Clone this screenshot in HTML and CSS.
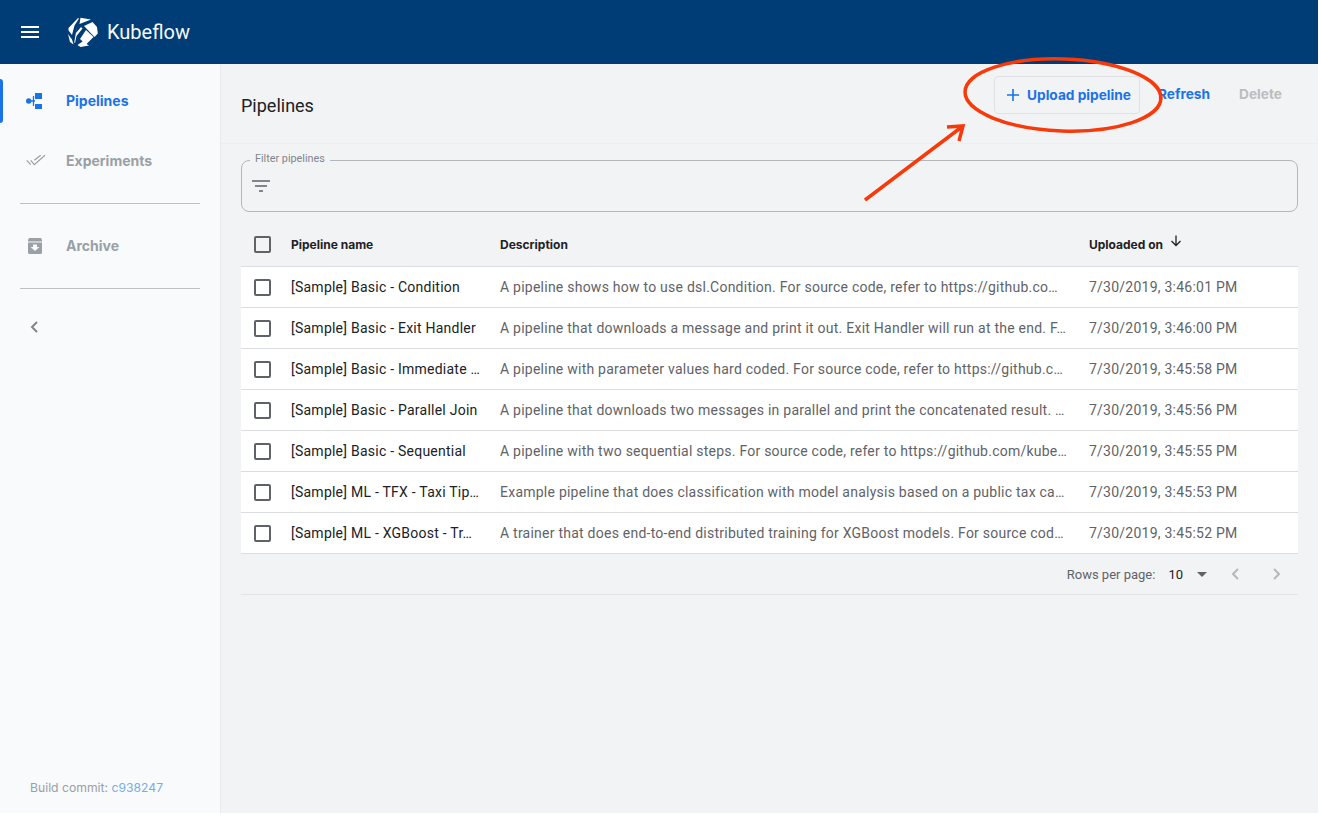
FILE: index.html
```html
<!DOCTYPE html>
<html lang="en">
<head>
<meta charset="utf-8">
<title>Kubeflow Pipelines</title>
<link rel="stylesheet" href="styles.css">
</head>
<body>
<div class="app">
  <header class="topbar">
    <svg class="menu-icon" width="18" height="12" viewBox="0 0 18 12"><path d="M0 0h18v2H0zM0 5h18v2H0zM0 10h18v2H0z" fill="#fff"/></svg>
    <svg class="logo" width="31" height="30" viewBox="0 0 31 30">
      <path fill="#fff" d="M1.500 11L11 1l1 .5-4.500 7-2.500 9.500-3.500-4.500zM13.500 .8L24 2.500 12.500 7zM25.500 5l4.500 5 .8 6.500L27.500 20 17 9zM1 17l4 5.500L6.500 27.500 3 25zM10 9.500L9 16l5-6 1.500 1.500L9.500 19 8 26l-.8-.5zM19 13l7.500 7-7.500 7.500-6-5.500zM10.500 28l5-3.500 6.500 4-8.500 1.500z"/>
    </svg>
    <span class="brand">Kubeflow</span>
  </header>
  <div class="body-row">
    <nav class="sidebar">
      <a class="nav-item active">
        <svg class="nav-icon" width="16" height="16" viewBox="0 0 16 16"><path fill="#1a73e8" d="M9 0h7v6H9zM9 11h7v5H9z"/><circle cx="2.700" cy="8" r="2.700" fill="#1a73e8"/><path fill="none" stroke="#1a73e8" stroke-width="1.300" d="M4 8h5M7.500 3v10"/></svg>
        <span>Pipelines</span>
      </a>
      <a class="nav-item">
        <svg class="nav-icon" width="20" height="14" viewBox="0 0 20 14"><path fill="none" stroke="#9aa0a6" stroke-width="1.200" d="M.7 6.300l4 4.400M4.700 6.300l3.600 4.400L19 1.300M8.300 6.300L14.700 1.300"/></svg>
        <span>Experiments</span>
      </a>
      <hr class="nav-rule">
      <a class="nav-item archive">
        <svg class="nav-icon icon-inset" width="16" height="16" viewBox="0 0 16 16"><path fill="#9aa0a6" d="M1 2l1-2h12l1 2v13l-1 1H2l-1-1z"/><path fill="#f8fafb" d="M1 3.500h14v1H1zM6 6.500h4V9h2.500L8 13 3.500 9H6z"/></svg>
        <span>Archive</span>
      </a>
      <hr class="nav-rule">
      <svg class="collapse" width="8" height="12" viewBox="0 0 8 12"><path fill="none" stroke="#80868b" stroke-width="2" d="M7 1L2 6l5 5"/></svg>
      <div class="build">Build commit: <a class="commit">c938247</a></div>
    </nav>
    <main class="content">
      <div class="toolbar">
        <h1 class="title">Pipelines</h1>
        <div class="actions">
          <button class="btn outlined"><svg width="12" height="12" viewBox="0 0 12 12"><path fill="#1a73e8" d="M5.200 0h1.600v5.200H12v1.600H6.800V12H5.200V6.800H0V5.200h5.200z"/></svg>Upload pipeline</button>
          <button class="btn text-btn refresh">Refresh</button>
          <button class="btn text-btn delete">Delete</button>
        </div>
      </div>
      <div class="table-area">
        <div class="filter">
          <span class="filter-label">Filter pipelines</span>
          <svg width="18" height="12" viewBox="0 0 18 12"><path fill="#80868b" d="M0 0h18v2H0zM3 5h12v2H3zM7 10h4v2H7z"/></svg>
        </div>
        <div class="row head">
          <span class="check dark"></span>
          <span class="cell">Pipeline name</span>
          <span class="cell">Description</span>
          <span class="cell sort">Uploaded on <svg width="12" height="12" viewBox="0 0 12 12"><path fill="none" stroke="#202124" stroke-width="1.300" d="M6 0.500v10M1.500 6L6 10.500 10.500 6"/></svg></span>
        </div>
        <div class="row item"><span class="check"></span><span class="cell name">[Sample] Basic - Condition</span><span class="cell desc">A pipeline shows how to use dsl.Condition. For source code, refer to https://github.co…</span><span class="cell desc date">7/30/2019, 3:46:01 PM</span></div>
        <div class="row item"><span class="check"></span><span class="cell name">[Sample] Basic - Exit Handler</span><span class="cell desc">A pipeline that downloads a message and print it out. Exit Handler will run at the end. F…</span><span class="cell desc date">7/30/2019, 3:46:00 PM</span></div>
        <div class="row item"><span class="check"></span><span class="cell name">[Sample] Basic - Immediate …</span><span class="cell desc">A pipeline with parameter values hard coded. For source code, refer to https://github.c…</span><span class="cell desc date">7/30/2019, 3:45:58 PM</span></div>
        <div class="row item"><span class="check"></span><span class="cell name">[Sample] Basic - Parallel Join</span><span class="cell desc">A pipeline that downloads two messages in parallel and print the concatenated result. …</span><span class="cell desc date">7/30/2019, 3:45:56 PM</span></div>
        <div class="row item"><span class="check"></span><span class="cell name">[Sample] Basic - Sequential</span><span class="cell desc">A pipeline with two sequential steps. For source code, refer to https://github.com/kube…</span><span class="cell desc date">7/30/2019, 3:45:55 PM</span></div>
        <div class="row item"><span class="check"></span><span class="cell name">[Sample] ML - TFX - Taxi Tip…</span><span class="cell desc">Example pipeline that does classification with model analysis based on a public tax ca…</span><span class="cell desc date">7/30/2019, 3:45:53 PM</span></div>
        <div class="row item"><span class="check"></span><span class="cell name">[Sample] ML - XGBoost - Tr…</span><span class="cell desc">A trainer that does end-to-end distributed training for XGBoost models. For source cod…</span><span class="cell desc date">7/30/2019, 3:45:52 PM</span></div>
        <div class="pager">
          <span class="pager-label">Rows per page:</span>
          <span class="pager-value">10</span>
          <svg class="caret" width="10" height="5" viewBox="0 0 10 5"><path fill="#5f6368" d="M0 0h10L5 5z"/></svg>
          <svg class="page-btn" width="8" height="12" viewBox="0 0 8 12"><path fill="none" stroke="#b4b7bb" stroke-width="2" d="M7 1L2 6l5 5"/></svg>
          <svg class="page-btn next" width="8" height="12" viewBox="0 0 8 12"><path fill="none" stroke="#b4b7bb" stroke-width="2" d="M1 1l5 5-5 5"/></svg>
        </div>
      </div>
    </main>
  </div>
  <svg class="annotation" width="380" height="160" viewBox="0 0 380 160">
    <g fill="none" stroke="#f8390a" stroke-width="3.500">
      <ellipse cx="199" cy="41" rx="98" ry="36" transform="rotate(2 199 41)"/>
      <path d="M1 146L99 72M83 73l16-1-4 15"/>
    </g>
  </svg>
</div>
</body>
</html>
```
FILE: styles.css
```css
* { box-sizing: border-box; }
html, body { margin: 0; padding: 0; background: #fff; }
body { font-family: Roboto, "Liberation Sans", sans-serif; color: #202124; }
.app { position: relative; width: 1318px; height: 813px; display: flex; flex-direction: column; overflow: hidden; }
.topbar { height: 64px; flex: none; background: #003c75; display: flex; align-items: center; padding-left: 21px; color: #fff; }
.menu-icon { margin-right: 28px; }
.logo { margin-right: 9px; }
.brand { font-size: 20px; color: #f8f9fa; }
.body-row { flex: 1; display: flex; min-height: 0; }
.sidebar { position: relative; width: 221px; flex: none; background: #f8fafb; border-right: 1px solid #e8eaed; padding-top: 7px; }
.nav-item { position: relative; display: flex; align-items: center; height: 60px; font-family: Inter, sans-serif; font-size: 14px; font-weight: 700; color: #9aa0a6; }
.nav-item.active { color: #1a73e8; }
.nav-item.active::before { content: ""; position: absolute; left: 0; top: 8px; width: 3px; height: 44px; background: #1a73e8; border-radius: 0 3px 3px 0; }
.nav-icon { position: absolute; left: 26px; }
.icon-inset { left: 27px; }
.nav-item span { margin: -2px 0 0 66px; }
.nav-rule { margin: 12px 20px 0; border: 0; border-top: 1px solid #bdc1c6; }
.archive { margin-top: 12px; }
.collapse { display: block; margin: 32px 0 0 30px; }
.build { position: absolute; left: 30px; bottom: 18px; font-size: 12.2px; font-family: Inter, sans-serif; color: #9aa0a6; }
.commit { color: #78aee6; }
.content { flex: 1; min-width: 0; background: #f2f3f5; }
.toolbar { height: 80px; border-bottom: 1px solid #eceef0; display: flex; align-items: center; padding: 0 20px; justify-content: space-between; }
.title { margin: 3px 0 0; font-size: 18px; font-weight: 400; color: #202124; }
.actions { display: flex; align-items: center; margin-top: -20px; margin-right: 15px; }
.btn { border: 0; background: none; font-family: Inter, sans-serif; font-weight: 700; font-size: 13.7px; padding: 0; }
.outlined { width: 146px; height: 38px; border: 1px solid #dfe1e5; border-radius: 4px; color: #1a73e8; display: flex; align-items: center; padding-left: 12px; gap: 8px; margin-top: 2px; }
.refresh { color: #1a73e8; margin-left: 18px; width: 52px; text-align: left; }
.delete { color: #bdbdbd; margin-left: 29px; width: 44px; text-align: left; }
.table-area { padding: 16px 20px 0; }
.filter { position: relative; height: 52px; border: 1px solid #b4b7bb; border-radius: 8px; padding: 19px 0 0 10px; }
.filter svg { display: block; }
.filter-label { position: absolute; left: 8px; top: -8px; padding: 0 5px; background: #f2f3f5; font-size: 10.8px; line-height: 12px; color: #80868b; }
.row { display: grid; grid-template-columns: 50px 209px 589px 209px; align-items: center; height: 41px; border-bottom: 1px solid #dcdde0; font-size: 14px; letter-spacing: .24px; }
.head { height: 55px; padding-top: 10px; font-family: Inter, sans-serif; font-size: 12px; font-weight: 700; letter-spacing: 0; }
.item { background: #fff; }
.check { justify-self: start; margin-left: 13px; width: 17px; height: 17px; border: 2px solid #5f6368; border-radius: 2px; }
.cell { min-width: 0; white-space: nowrap; }
.desc { color: #5f6368; }
.name { color: #202124; }
.sort { display: flex; align-items: center; gap: 7px; }
.sort svg { margin-top: -6px; }
.pager { height: 41px; display: flex; align-items: center; justify-content: flex-end; border-bottom: 1px solid #e3e4e6; font-size: 13px; color: #5f6368; padding-right: 17px; }
.pager-value { margin-left: 13px; color: #202124; }
.caret { margin-left: 14px; }
.page-btn { margin-left: 24px; }
.page-btn.next { margin-left: 34px; }
.annotation { position: absolute; left: 864px; top: 54px; }
```
